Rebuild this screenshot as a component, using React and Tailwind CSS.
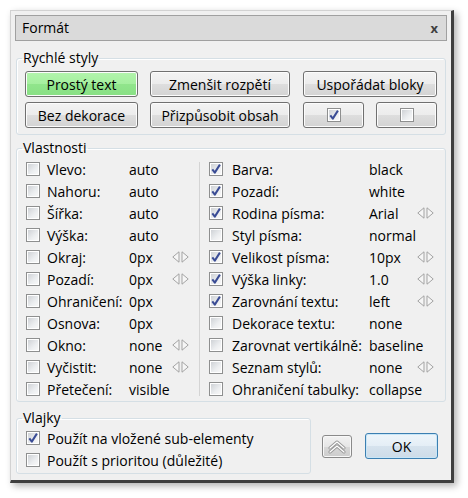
import { useState } from 'react';

const leftProps = [
  { label: 'Vlevo:', value: 'auto' },
  { label: 'Nahoru:', value: 'auto' },
  { label: 'Šířka:', value: 'auto' },
  { label: 'Výška:', value: 'auto' },
  { label: 'Okraj:', value: '0px', arrows: true },
  { label: 'Pozadí:', value: '0px', arrows: true },
  { label: 'Ohraničení:', value: '0px' },
  { label: 'Osnova:', value: '0px' },
  { label: 'Okno:', value: 'none', arrows: true },
  { label: 'Vyčistit:', value: 'none', arrows: true },
  { label: 'Přetečení:', value: 'visible' },
];

const rightProps = [
  { label: 'Barva:', value: 'black', checked: true },
  { label: 'Pozadí:', value: 'white', checked: true },
  { label: 'Rodina písma:', value: 'Arial', checked: true, arrows: true },
  { label: 'Styl písma:', value: 'normal' },
  { label: 'Velikost písma:', value: '10px', checked: true, arrows: true },
  { label: 'Výška linky:', value: '1.0', checked: true, arrows: true },
  { label: 'Zarovnání textu:', value: 'left', checked: true, arrows: true },
  { label: 'Dekorace textu:', value: 'none' },
  { label: 'Zarovnat vertikálně:', value: 'baseline' },
  { label: 'Seznam stylů:', value: 'none', arrows: true },
  { label: 'Ohraničení tabulky:', value: 'collapse' },
];

function CheckBox({ checked }) {
  return (
    <span className="w-[14px] h-[14px] shrink-0 border border-[#8e8f8f] bg-white p-px flex">
      <span className="flex-1 flex items-center justify-center bg-[linear-gradient(135deg,#cfd2d6,#eceef0_60%,#f8f8f8)]">
        {checked && (
          <svg width="10" height="10" viewBox="0 0 10 10" className="overflow-visible">
            <path d="M1.3 5.3 L3.8 8.6 L8.9 0.6" fill="none" stroke="#3a4c95" strokeWidth="2" strokeLinejoin="round" />
          </svg>
        )}
      </span>
    </span>
  );
}

function Arrows() {
  return (
    <svg width="17" height="12" viewBox="0 0 17 12" className="shrink-0">
      <path d="M0.8 6 L7 0.8 L7 11.2 Z" fill="#f6f6f6" stroke="#a3a3a3" strokeLinejoin="round" />
      <path d="M16.2 6 L10 0.8 L10 11.2 Z" fill="#f6f6f6" stroke="#a3a3a3" strokeLinejoin="round" />
    </svg>
  );
}

function Button({ children, className = '', green }) {
  return (
    <button
      className={`h-[26px] rounded-[3px] border border-[#707070] shadow-[inset_0_0_0_1px_#fcfcfc] flex items-center justify-center text-[14px] text-black ${
        green
          ? 'bg-[linear-gradient(#b2f4ac,#a5ef9f_50%,#91e58c_50%,#88e084)]'
          : 'bg-[linear-gradient(#f3f3f3,#ececec_50%,#dedede_50%,#d3d3d3)]'
      } ${className}`}
    >
      {children}
    </button>
  );
}

function Group({ title, className = '', children }) {
  return (
    <fieldset className={`border border-[#d5dfe5] rounded-[3px] shadow-[inset_1px_1px_0_#ffffff] ${className}`}>
      <legend className="ml-[5px] px-px leading-[18px] text-[14px]">{title}</legend>
      {children}
    </fieldset>
  );
}

export default function App() {
  const [flags] = useState({ nested: true, important: false });

  return (
    <div className="min-h-screen bg-white pl-[10px] pt-[10px] text-black" style={{ fontFamily: '"Open Sans", "Noto Sans", sans-serif' }}>
      <div className="w-[444px] h-[473px] bg-[#f0f0f0] border-l border-t border-[#d2d2d2] border-r-[3px] border-b-[3px] border-r-[#3f3f3f] border-b-[#3f3f3f] shadow-[3px_3px_7px_rgba(0,0,0,0.3)] px-[4px] pt-[4px] flex flex-col">
        {/* title bar */}
        <div className="h-[26px] shrink-0 border border-[#a0a0a0] bg-[#dadada] flex items-center justify-between pl-[6px] pr-[8px]">
          <span className="text-[14px] leading-none">Formát</span>
          <span className="text-[13px] font-bold text-[#404040] leading-none">x</span>
        </div>

        <div className="px-px">
          <Group title="Rychlé styly" className="mt-[8px]">
            <div className="px-[8px] pt-[4px] pb-[6px] flex flex-col gap-[5px]">
              <div className="flex">
                <Button green className="w-[113px]">Prostý text</Button>
                <Button className="w-[140px] ml-[12px]">Zmenšit rozpětí</Button>
                <Button className="w-[134px] ml-[13px]">Uspořádat bloky</Button>
              </div>
              <div className="flex">
                <Button className="w-[113px]">Bez dekorace</Button>
                <Button className="w-[140px] ml-[12px]">Přizpůsobit obsah</Button>
                <Button className="w-[61px] ml-[13px]">
                  <CheckBox checked />
                </Button>
                <Button className="w-[61px] ml-[12px]">
                  <CheckBox />
                </Button>
              </div>
            </div>
          </Group>

          <Group title="Vlastnosti" className="mt-[4px]">
            <div className="flex pt-px pb-px text-[14px]">
              <div className="w-[182px] flex flex-col">
                {leftProps.map((p) => (
                  <div key={p.label} className="h-[22px] flex items-center pl-[9px]">
                    <CheckBox checked={p.checked} />
                    <span className="ml-[7px] w-[82px] whitespace-nowrap">{p.label}</span>
                    <span className="w-[43px]">{p.value}</span>
                    {p.arrows && <Arrows />}
                  </div>
                ))}
              </div>
              <div className="w-px bg-[#d4d4d4] my-[4px]" />
              <div className="flex-1 flex flex-col">
                {rightProps.map((p) => (
                  <div key={p.label} className="h-[22px] flex items-center pl-[9px]">
                    <CheckBox checked={p.checked} />
                    <span className="ml-[9px] w-[137px] whitespace-nowrap">{p.label}</span>
                    <span className="w-[48px]">{p.value}</span>
                    {p.arrows && <Arrows />}
                  </div>
                ))}
              </div>
            </div>
          </Group>

          <div className="flex items-start mt-[7px]">
            <Group title="Vlajky" className="w-[295px]">
              <div className="flex flex-col pb-[2px] text-[14px]">
                <div className="h-[22px] flex items-center pl-[9px]">
                  <CheckBox checked={flags.nested} />
                  <span className="ml-[7px] whitespace-nowrap">Použít na vložené sub-elementy</span>
                </div>
                <div className="h-[22px] flex items-center pl-[9px]">
                  <CheckBox checked={flags.important} />
                  <span className="ml-[7px] whitespace-nowrap">Použít s prioritou (důležité)</span>
                </div>
              </div>
            </Group>

            <button className="ml-[11px] mt-[26px] w-[30px] h-[23px] rounded-[3px] border border-[#8a8a8a] bg-[linear-gradient(#f2f2f2,#e6e6e6_50%,#d8d8d8_50%,#cdcdcd)] shadow-[inset_0_0_0_1px_#f8f8f8] flex items-center justify-center">
              <svg width="18" height="14" viewBox="0 0 18 14">
                <path d="M2 8 L9 2 L16 8" fill="none" stroke="#9a9a9a" strokeWidth="3" strokeLinejoin="round" strokeLinecap="round" />
                <path d="M2 8 L9 2 L16 8" fill="none" stroke="#ffffff" strokeWidth="1.2" strokeLinejoin="round" strokeLinecap="round" />
                <path d="M2 12 L9 6 L16 12" fill="none" stroke="#9a9a9a" strokeWidth="3" strokeLinejoin="round" strokeLinecap="round" />
                <path d="M2 12 L9 6 L16 12" fill="none" stroke="#ffffff" strokeWidth="1.2" strokeLinejoin="round" strokeLinecap="round" />
              </svg>
            </button>

            <button className="ml-[13px] mt-[24px] w-[73px] h-[26px] rounded-[3px] border border-[#3c7fb1] bg-[linear-gradient(#eef5fa,#e4eef6_50%,#d6e3ee_50%,#cddbe8)] shadow-[inset_0_0_0_1px_#c8e6f7] flex items-center justify-center text-[14px]">
              OK
            </button>
          </div>
        </div>
      </div>
    </div>
  );
}
